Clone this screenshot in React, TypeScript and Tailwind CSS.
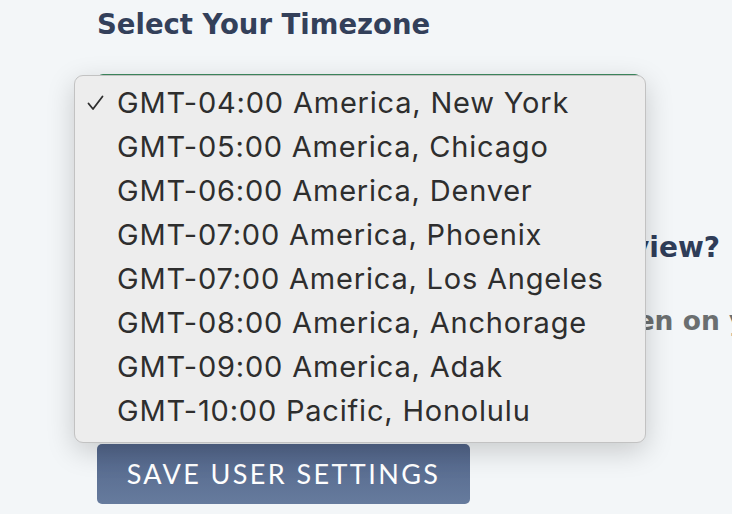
import React from "react";

const zones = [
  "GMT-04:00 America, New York",
  "GMT-05:00 America, Chicago",
  "GMT-06:00 America, Denver",
  "GMT-07:00 America, Phoenix",
  "GMT-07:00 America, Los Angeles",
  "GMT-08:00 America, Anchorage",
  "GMT-09:00 America, Adak",
  "GMT-10:00 Pacific, Honolulu",
];

export default function App() {
  return (
    <div className="relative h-[514px] w-[732px] overflow-hidden bg-[#f3f6f8]">
      <div className="flex flex-col pl-[97px] pt-[6px]">
        <h1
          className="text-[27.5px] font-bold leading-[36px] text-[#33405a]"
          style={{ fontFamily: "'DejaVu Sans', sans-serif" }}
        >
          Select Your Timezone
        </h1>
        <div className="mt-[32px] h-[54px] w-[544px] rounded-md border-2 border-[#3e8a5f] bg-white" />
        <div
          className="mt-[102px] w-[623px] whitespace-nowrap text-right text-[28px] font-bold leading-[36px] text-[#2f3d58]"
          style={{ fontFamily: "'DejaVu Sans', sans-serif" }}
        >
          Show a weekly preview?
        </div>
        <div
          className="ml-[396px] mt-[37px] whitespace-nowrap text-[26.5px] font-bold leading-[36px] text-[#6b6f70]"
          style={{ fontFamily: "'DejaVu Sans', sans-serif" }}
        >
          Events seen on your calendar
        </div>
        <button
          className="mt-[105px] flex h-[60px] w-[373px] items-center justify-center rounded-[5px] bg-gradient-to-b from-[#52658a] to-[#667b9d] text-[27px] tracking-[2.4px] text-white"
          style={{ fontFamily: "Lato, sans-serif" }}
        >
          SAVE USER SETTINGS
        </button>
      </div>

      <div
        className="absolute left-[74px] top-[75px] h-[368px] w-[572px] rounded-[9px] border border-[#c2c2c2] bg-[#ededed] pt-[5px] shadow-[0_8px_28px_rgba(0,0,0,0.18)]"
        style={{ fontFamily: "Inter, sans-serif" }}
      >
        {zones.map((z, i) => (
          <div key={z} className="flex h-[44px] items-center text-[29px] tracking-[0.8px] text-[#2e2e2e]">
            <span className="flex w-[42px] justify-end pr-[13px]">
              {i === 0 && (
                <svg width="17" height="16" viewBox="0 0 17 16" fill="none">
                  <path d="M1.5 8.5 L6 14 L15.5 1.5" stroke="#2e2e2e" strokeWidth="1.8" strokeLinecap="round" strokeLinejoin="round" />
                </svg>
              )}
            </span>
            <span>{z}</span>
          </div>
        ))}
      </div>
    </div>
  );
}
